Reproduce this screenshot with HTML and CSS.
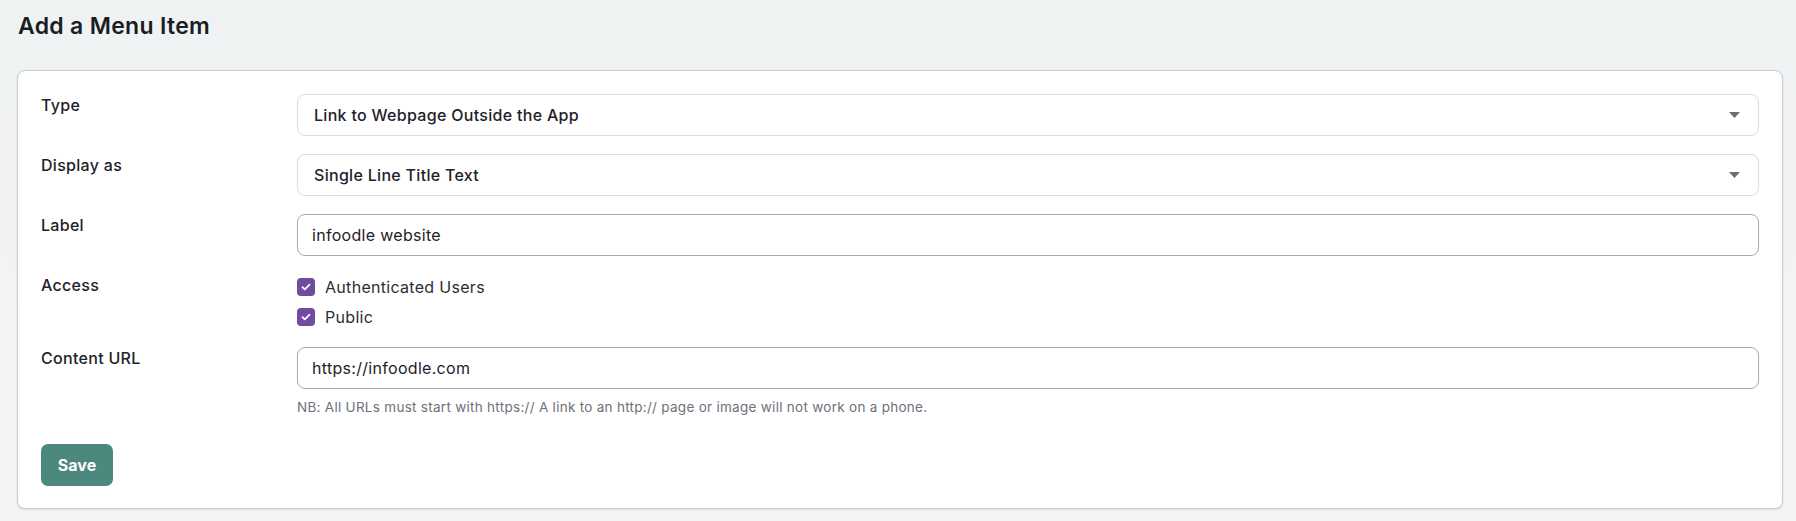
FILE: index.html
```html
<!DOCTYPE html>
<html lang="en">
<head>
<meta charset="utf-8">
<title>Add a Menu Item</title>
<link rel="stylesheet" href="styles.css">
</head>
<body>
<header class="page-head">
  <h1 class="page-title">Add a Menu Item</h1>
</header>

<main class="card">
  <form class="menu-form">
    <label class="field-label" for="type">Type</label>
    <div class="select-wrap">
      <select id="type" class="control control-select">
        <option>Link to Webpage Outside the App</option>
      </select>
      <svg class="caret" width="11" height="6" viewBox="0 0 11 6"><path d="M0 0H11L5.5 6Z" fill="#6b6e78"/></svg>
    </div>

    <label class="field-label" for="display">Display as</label>
    <div class="select-wrap">
      <select id="display" class="control control-select">
        <option>Single Line Title Text</option>
      </select>
      <svg class="caret" width="11" height="6" viewBox="0 0 11 6"><path d="M0 0H11L5.5 6Z" fill="#6b6e78"/></svg>
    </div>

    <label class="field-label" for="label">Label</label>
    <input id="label" class="control control-text" type="text" value="infoodle website">

    <span class="field-label">Access</span>
    <div class="check-list">
      <label class="check-item">
        <span class="check-box"><svg width="10" height="8" viewBox="0 0 10 8"><path d="M1.5 4.2L3.8 6.3L8.5 1.6" fill="none" stroke="#fff" stroke-width="1.8" stroke-linecap="round" stroke-linejoin="round"/></svg></span>
        Authenticated Users
      </label>
      <label class="check-item">
        <span class="check-box"><svg width="10" height="8" viewBox="0 0 10 8"><path d="M1.5 4.2L3.8 6.3L8.5 1.6" fill="none" stroke="#fff" stroke-width="1.8" stroke-linecap="round" stroke-linejoin="round"/></svg></span>
        Public
      </label>
    </div>

    <label class="field-label" for="url">Content URL</label>
    <div class="field-body">
      <input id="url" class="control control-text" type="text" value="https://infoodle.com">
      <p class="help-text">NB: All URLs must start with https:// A link to an http:// page or image will not work on a phone.</p>
    </div>

    <div class="form-actions">
      <button type="button" class="btn-save">Save</button>
    </div>
  </form>
</main>
</body>
</html>
```

FILE: styles.css
```css
* {
  box-sizing: border-box;
}

body {
  margin: 0;
  min-height: 521px;
  background: linear-gradient(to bottom, #eef2f3 0, #f1f3f3 120px, #f4f4f4 100%);
  font-family: "Inter", "Open Sans", sans-serif;
  color: #1f2229;
}

.page-head {
  padding: 11px 18px 0;
  height: 70px;
}

.page-title {
  margin: 0;
  font-size: 23px;
  line-height: 30px;
  font-weight: 600;
  letter-spacing: 0.3px;
  color: #1b1d24;
}

.card {
  margin: 0 13px 0 17px;
  background: #fff;
  border: 1px solid #c9ccd6;
  border-radius: 8px;
  box-shadow: 0 1px 2px rgba(40, 44, 60, 0.12);
  padding: 23px 23px 22px;
}

.menu-form {
  display: grid;
  grid-template-columns: 256px 1fr;
  row-gap: 18px;
}

.field-label {
  font-size: 16px;
  line-height: 22px;
  font-weight: 500;
  letter-spacing: 0.3px;
  color: #1f2229;
}

.select-wrap {
  position: relative;
}

.control {
  display: block;
  width: 100%;
  height: 42px;
  margin: 0;
  background: #fff;
  border-radius: 8px;
  font-family: inherit;
  font-size: 16px;
  letter-spacing: 0.3px;
  color: #1f2229;
  outline: none;
}

.control-select {
  appearance: none;
  -webkit-appearance: none;
  border: 1px solid #dcdde1;
  padding: 0 40px 0 16px;
  font-weight: 500;
}

.control-text {
  border: 1px solid #a9acb7;
  padding: 0 14px;
  font-weight: 400;
}

.caret {
  position: absolute;
  right: 19px;
  top: 18px;
  pointer-events: none;
}

.check-list {
  display: flex;
  flex-direction: column;
  gap: 4px;
  margin-bottom: -1px;
}

.check-item {
  display: flex;
  align-items: center;
  gap: 10px;
  height: 26px;
  font-size: 16px;
  letter-spacing: 0.3px;
  font-weight: 400;
  color: #2b2e36;
}

.check-box {
  width: 18px;
  height: 18px;
  border-radius: 4px;
  background: #714b9f;
  display: flex;
  align-items: center;
  justify-content: center;
}

.field-body {
  display: flex;
  flex-direction: column;
}

.help-text {
  margin: 9px 0 0;
  font-size: 13.5px;
  line-height: 18px;
  letter-spacing: 0.28px;
  color: #6d717a;
}

.form-actions {
  grid-column: 1 / -1;
  padding-top: 10px;
}

.btn-save {
  width: 72px;
  height: 42px;
  border: 0;
  border-radius: 7px;
  background: #4d887f;
  color: #fff;
  font-family: inherit;
  font-size: 16px;
  font-weight: 700;
}
```
